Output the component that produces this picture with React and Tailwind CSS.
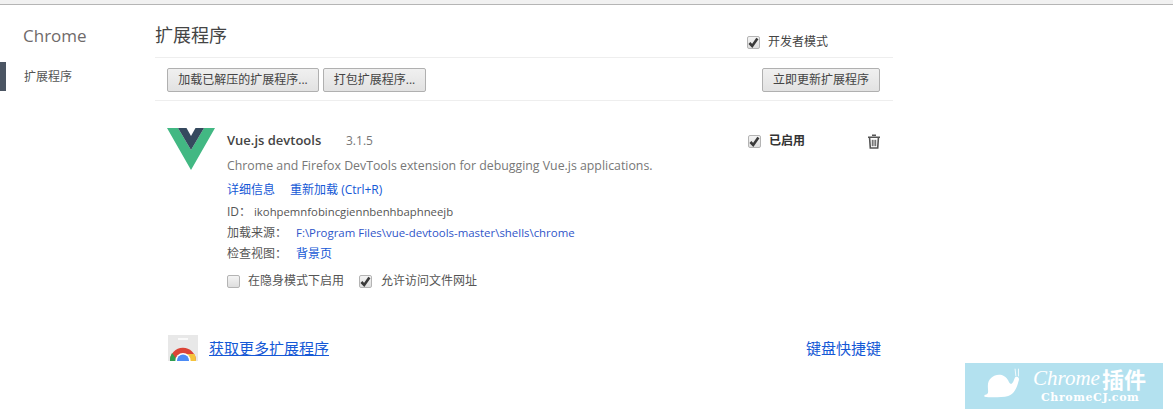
const FONT = '"Open Sans", "Noto Sans CJK SC", sans-serif';

function Check({ checked, className = '' }) {
  return (
    <span className={`relative block w-[13px] h-[13px] shrink-0 rounded-[2px] border border-[#b4b4b4] bg-gradient-to-b from-[#f4f4f4] to-[#dedede] ${className}`}>
      {checked && (
        <svg viewBox="0 0 13 13" className="absolute left-[-1px] top-[-1px] w-[13px] h-[13px]">
          <path d="M2.4 7 L5.2 10 L10.4 2.6" fill="none" stroke="#3a3a3a" strokeWidth="2.6" />
        </svg>
      )}
    </span>
  );
}

function Btn({ children, className = '' }) {
  return (
    <div className={`h-[24px] pt-px flex items-center justify-center rounded-[2px] border border-[#b0b0b0] bg-gradient-to-b from-[#f0f0f0] to-[#e2e2e2] text-[12px] text-[#444] leading-none ${className}`}>
      {children}
    </div>
  );
}

function Vue() {
  return (
    <svg viewBox="0 0 48 42" className="w-[48px] h-[42px] shrink-0">
      <path d="M0 0 H11 L24 22 L37 0 H48 L24 42 Z" fill="#42b883" />
      <path d="M11 0 H19.5 L24 8 L28.5 0 H37 L24 22 Z" fill="#35495e" />
    </svg>
  );
}

function Store() {
  return (
    <svg viewBox="0 0 30 26" className="w-[30px] h-[26px] shrink-0">
      <rect x="0" y="0" width="30" height="26" fill="#e8e8e8" />
      <rect x="10" y="3" width="10" height="2" fill="#fafafa" />
      <path d="M2 26 A13 13 0 0 1 28 25.5 L15 25.5 Z" fill="#db4437" />
      <path d="M2 26 A13 13 0 0 1 4 18 L10 26 Z" fill="#2f9e4f" />
      <path d="M28 26 A13 13 0 0 0 26.5 19 L15 19 L20 26 Z" fill="#f5c33b" />
      <circle cx="15" cy="25.5" r="7.6" fill="#fff" />
      <circle cx="15" cy="25.5" r="6" fill="#4c8bf5" />
    </svg>
  );
}

function Trash() {
  return (
    <svg viewBox="0 0 14 15" className="w-[14px] h-[15px]">
      <path d="M5 1.2 H9 M1 3.2 H13" stroke="#555" strokeWidth="1.6" fill="none" />
      <path d="M2.6 4 L3.3 14 H10.7 L11.4 4" stroke="#555" strokeWidth="1.6" fill="none" />
      <path d="M5.3 5.8 V12.2 M7 5.8 V12.2 M8.7 5.8 V12.2" stroke="#555" strokeWidth="1" fill="none" />
    </svg>
  );
}

export default function App() {
  return (
    <div className="relative w-[1173px] h-[419px] bg-white overflow-hidden" style={{ fontFamily: FONT }}>
      <div className="h-[5px] bg-[#f1f1f1] border-b border-[#b5b5b5]" />
      <div className="flex">
        <aside className="w-[155px] shrink-0">
          <div className="pl-[23px] pt-[19px] h-[57px] text-[17px] leading-[24px] text-[#6f6a6a]">Chrome</div>
          <div className="h-[29px] border-l-[6px] border-[#4b5563] pl-[18px] flex items-center text-[12px] text-[#555]">扩展程序</div>
        </aside>
        <main className="w-[738px]">
          <div className="h-[53px] border-b border-[#eeeeee] flex">
            <h1 className="pt-[18px] text-[18px] leading-[24px] font-normal text-[#444] flex-1">扩展程序</h1>
            <label className="flex items-center gap-[8px] h-[16px] mt-[29px] mr-[65px] text-[12px] text-[#444]">
              <Check checked />
              <span>开发者模式</span>
            </label>
          </div>
          <div className="h-[43px] border-b border-[#eeeeee] flex items-center pt-px">
            <Btn className="w-[152px] ml-[12px]">加载已解压的扩展程序...</Btn>
            <Btn className="w-[103px] ml-[4px]">打包扩展程序...</Btn>
            <Btn className="w-[118px] ml-auto mr-[13px]">立即更新扩展程序</Btn>
          </div>
          <section className="flex pl-[12px] pt-[27px]">
            <Vue />
            <div className="ml-[12px] flex-1 pt-px text-[12px] text-[#555]">
              <div className="flex items-center h-[24px]">
                <span className="text-[13px] font-semibold text-[#444] w-[119px]">Vue.js devtools</span>
                <span className="text-[#777]">3.1.5</span>
                <label className="ml-auto flex items-center gap-[8px] font-semibold text-[#333]">
                  <Check checked />
                  <span>已启用</span>
                </label>
                <span className="ml-[62px] mr-[12px] flex"><Trash /></span>
              </div>
              <div className="h-[25px] text-[12.33px] leading-[25px] text-[#777]">Chrome and Firefox DevTools extension for debugging Vue.js applications.</div>
              <div className="h-[23px] flex items-center text-[#1558d6]">
                <span>详细信息</span>
                <span className="ml-[15px]">重新加载 (Ctrl+R)</span>
              </div>
              <div className="h-[22px] flex items-center">
                <span className="w-[27px]">ID：</span>
                <span className="text-[11.34px]">ikohpemnfobincgiennbenhbaphneejb</span>
              </div>
              <div className="h-[20px] flex items-center">
                <span className="w-[69px]">加载来源：</span>
                <span className="text-[11.43px] text-[#2f55c9]">F:\Program Files\vue-devtools-master\shells\chrome</span>
              </div>
              <div className="h-[21px] flex items-center">
                <span className="w-[69px]">检查视图：</span>
                <span className="text-[#1558d6]">背景页</span>
              </div>
              <div className="mt-[8px] flex items-center h-[18px]">
                <Check />
                <span className="ml-[8px]">在隐身模式下启用</span>
                <Check checked className="ml-[15px]" />
                <span className="ml-[9px]">允许访问文件网址</span>
              </div>
            </div>
          </section>
          <div className="mt-[45px] flex items-center h-[26px] pl-[13px] text-[15px] text-[#1558d6]">
            <Store />
            <span className="ml-[11px] underline">获取更多扩展程序</span>
            <span className="ml-auto mr-[12px]">键盘快捷键</span>
          </div>
        </main>
      </div>
      <div className="absolute left-[965px] top-[363px] w-[198px] h-[46px] bg-[#b3e1ef] text-white">
        <svg viewBox="0 0 50 40" className="absolute left-[14px] top-[4px] w-[50px] h-[34px]">
          <path d="M2 33 C8 31 6 30 6 22 C6 9 24 4 30 16 C32 21 34 21 36 17 L38 12 C41 10 44 13 42 17 C40 24 38 31 30 34 C22 36 8 36 2 35 Z" fill="#fff" />
          <path d="M39 11 L38 2 M42 11 L42 2" stroke="#fff" strokeWidth="1" />
        </svg>
        <span className="absolute left-[68px] top-[2px] flex items-center text-[21px] leading-[26px] italic whitespace-nowrap" style={{ fontFamily: '"Liberation Serif", serif' }}>Chrome<span className="ml-[2px] text-[22px] not-italic font-bold" style={{ fontFamily: '"Noto Sans CJK SC", sans-serif' }}>插件</span></span>
        <span className="absolute left-[76px] top-[28px] text-[11px] leading-[14px] font-bold tracking-[0.6px] whitespace-nowrap" style={{ fontFamily: '"DejaVu Serif", serif' }}>ChromeCJ.com</span>
      </div>
    </div>
  );
}
